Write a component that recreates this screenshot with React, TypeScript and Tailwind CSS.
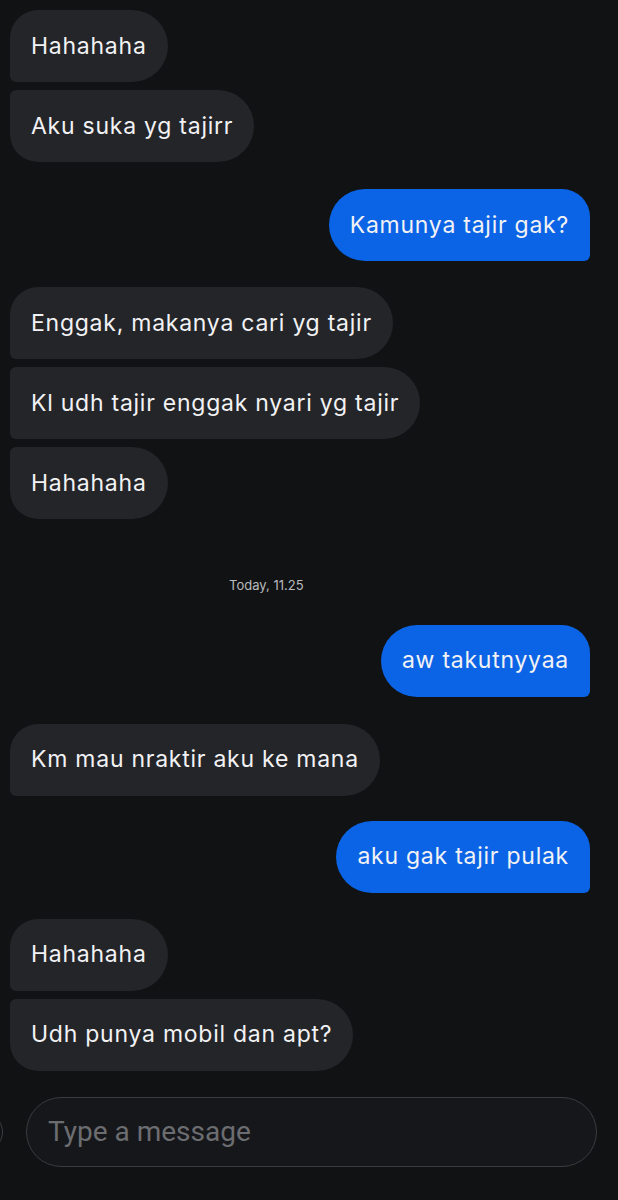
import React from 'react';

type Msg = {
  text: string;
  mine: boolean;
  // position in the group: single, first, middle, last
  pos: 'single' | 'first' | 'middle' | 'last';
  top: string;
};

const messages: Msg[] = [
  { text: 'Hahahaha', mine: false, pos: 'first', top: 'mt-[10px]' },
  { text: 'Aku suka yg tajirr', mine: false, pos: 'last', top: 'mt-[8px]' },
  { text: 'Kamunya tajir gak?', mine: true, pos: 'single', top: 'mt-[27px]' },
  { text: 'Enggak, makanya cari yg tajir', mine: false, pos: 'first', top: 'mt-[26px]' },
  { text: 'Kl udh tajir enggak nyari yg tajir', mine: false, pos: 'middle', top: 'mt-[8px]' },
  { text: 'Hahahaha', mine: false, pos: 'last', top: 'mt-[8px]' },
];

const messages2: Msg[] = [
  { text: 'aw takutnyyaa', mine: true, pos: 'single', top: 'mt-[0px]' },
  { text: 'Km mau nraktir aku ke mana', mine: false, pos: 'single', top: 'mt-[27px]' },
  { text: 'aku gak tajir pulak', mine: true, pos: 'single', top: 'mt-[25px]' },
  { text: 'Hahahaha', mine: false, pos: 'first', top: 'mt-[26px]' },
  { text: 'Udh punya mobil dan apt?', mine: false, pos: 'last', top: 'mt-[8px]' },
];

function Bubble({ m }: { m: Msg }) {
  let shape = '';
  if (m.mine) {
    shape = 'self-end mr-[28px] bg-[#0b64e6] rounded-l-[36px] rounded-tr-[28px] rounded-br-[6px]';
  } else if (m.pos === 'first' || m.pos === 'single') {
    shape = 'self-start ml-[10px] bg-[#242529] rounded-r-[36px] rounded-tl-[28px] rounded-bl-[6px]';
  } else if (m.pos === 'middle') {
    shape = 'self-start ml-[10px] bg-[#242529] rounded-r-[36px] rounded-tl-[6px] rounded-bl-[6px]';
  } else {
    shape = 'self-start ml-[10px] bg-[#242529] rounded-r-[36px] rounded-tl-[6px] rounded-bl-[28px]';
  }
  return (
    <div
      className={`${m.top} ${shape} h-[72px] flex items-center px-[21px] text-[23px] tracking-[0.75px] text-[#f2f2f4] whitespace-nowrap`}
      style={{ fontFamily: 'Inter, "Noto Sans", sans-serif' }}
    >
      {m.text}
    </div>
  );
}

export default function App() {
  return (
    <div className="w-[618px] h-[1200px] bg-[#111214] flex flex-col overflow-hidden">
      {messages.map((m, i) => (
        <Bubble key={i} m={m} />
      ))}

      <div
        className="mt-[57px] mb-[29px] ml-[229px] text-[13px] text-[#b9babd]"
        style={{ fontFamily: 'Inter, "Noto Sans", sans-serif' }}
      >
        Today, 11.25
      </div>

      {messages2.map((m, i) => (
        <Bubble key={i} m={m} />
      ))}

      <div className="mt-[26px] flex items-center">
        <div className="w-[40px] h-[40px] ml-[-37px] rounded-full border border-[#3c3d40] shrink-0" />
        <div className="ml-[23px] w-[571px] h-[70px] rounded-full border border-[#3a3b3f] bg-[#16171a] flex items-center pl-[21px]">
          <span
            className="text-[28px] text-[#6c6d71]"
            style={{ fontFamily: 'Roboto, "Liberation Sans", sans-serif' }}
          >
            Type a message
          </span>
        </div>
      </div>
    </div>
  );
}
